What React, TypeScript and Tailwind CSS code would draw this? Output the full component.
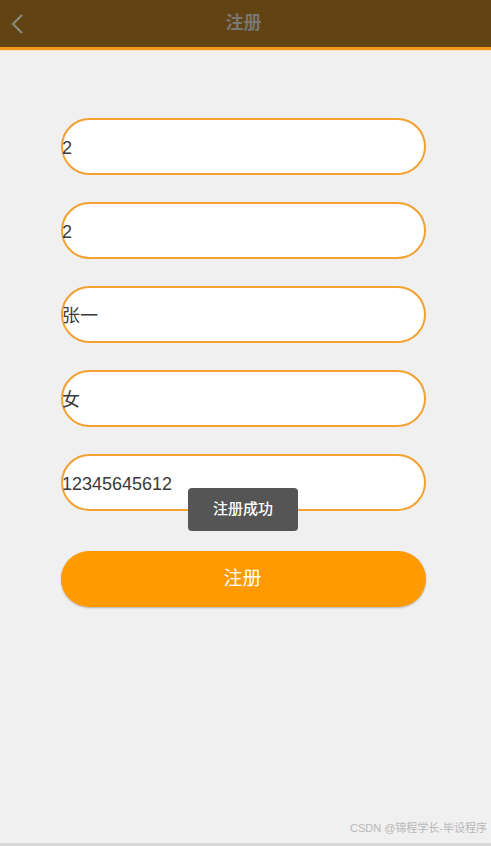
import React from 'react';

const fields = ['2', '2', '张一', '女', '12345645612'];

export default function App() {
  return (
    <div
      className="relative flex h-[846px] w-[491px] flex-col overflow-hidden bg-[#f0f0f0]"
      style={{ fontFamily: '"Liberation Sans", "Noto Sans CJK SC", sans-serif' }}
    >
      <div className="flex h-[47px] shrink-0 items-center bg-[#624314] px-[10px]">
        <svg width="14" height="22" viewBox="0 0 14 22" className="shrink-0">
          <path d="M12 2 L3 11 L12 20" fill="none" stroke="#8a8a7a" strokeWidth="2.2" />
        </svg>
        <div className="flex-1 pr-[18px] text-center text-[18px] font-bold text-[#7a7670]">注册</div>
      </div>
      <div className="h-[3px] shrink-0 bg-[#f39a1e]" />
      <div className="h-[1px] shrink-0 bg-[#fbe3c0]" />

      <div className="flex flex-col gap-[27px] pl-[61px] pr-[65px] pt-[67px]">
        {fields.map((v, i) => (
          <div
            key={i}
            className="flex h-[57px] items-center rounded-full border-2 border-[#f2a231] bg-white pt-[3px] text-[18px] text-[#3a3a3a]"
          >
            <span className="-ml-[1px]">{v}</span>
          </div>
        ))}
        <div className="mt-[13px] flex h-[56px] items-center justify-center rounded-full bg-[#ff9b00] text-[19px] text-white shadow-[0_1px_2px_rgba(0,0,0,0.25)]">
          <span className="-ml-[2px]">注册</span>
        </div>
      </div>

      <div className="absolute left-[188px] top-[488px] flex h-[43px] w-[110px] items-center justify-center rounded-[4px] bg-[#555555] text-[15px] font-medium text-white">
        注册成功
      </div>

      <div className="absolute bottom-[10px] right-[4px] text-[11px] text-[#b8b8b8]">CSDN @锦程学长-毕设程序</div>
      <div className="absolute bottom-0 left-0 h-[3px] w-full bg-[#d8d8d8]" />
    </div>
  );
}
